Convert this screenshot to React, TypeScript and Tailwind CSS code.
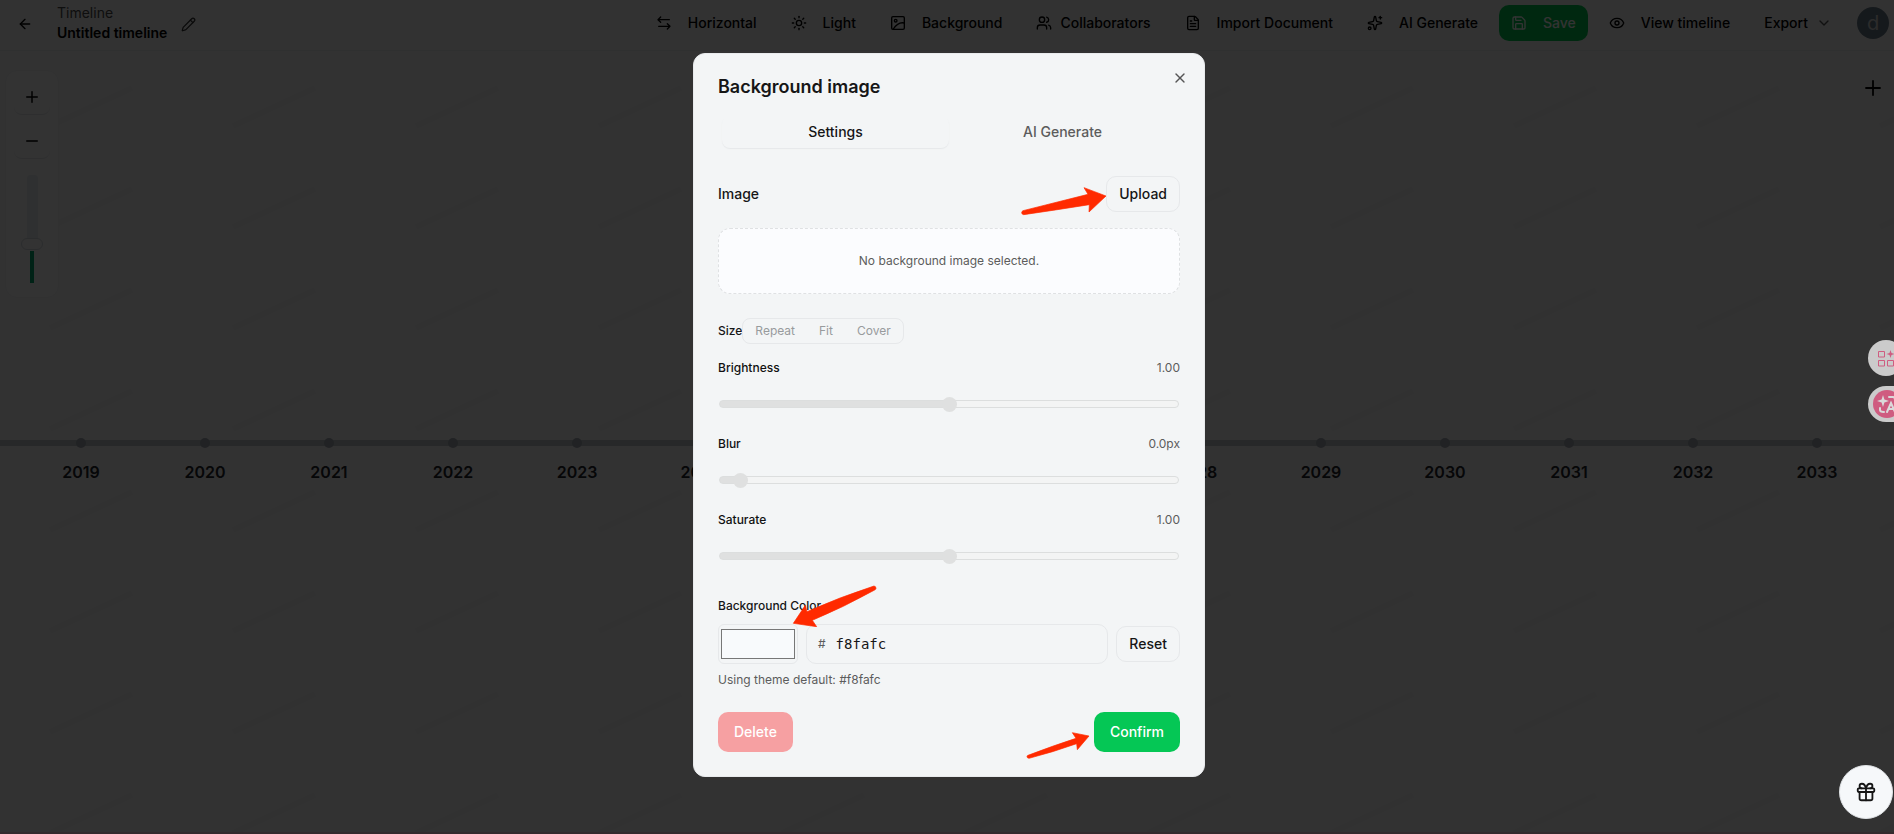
import { useState } from "react";
import type { ReactNode } from "react";
import clsx from "clsx";
import {
  ArrowLeft, ChevronDown, Eye, FileText, Gift, Minus, Pencil, Plus, Save, Sparkles, Sun, Users, X
} from "lucide-react";

const YEARS = Array.from({ length: 15 }, (_, i) => 2019 + i);

const SIZES = ["Repeat", "Fit", "Cover"];

const FILTERS = [
  { id: "brightness", label: "Brightness", display: "1.00", position: 50 },
  { id: "blur", label: "Blur", display: "0.0px", position: 3 },
  { id: "saturate", label: "Saturate", display: "1.00", position: 50 },
];

function SwapIcon() {
  return (
    <svg viewBox="0 0 24 24" className="w-4 h-4" fill="none" stroke="currentColor" strokeWidth="2" strokeLinecap="round" strokeLinejoin="round" aria-hidden="true">
      <path d="M20 7H3M7 3L3 7l4 4" />
      <path d="M4 17h17M17 13l4 4-4 4" />
    </svg>
  );
}

function PictureIcon() {
  return (
    <svg viewBox="0 0 24 24" className="w-4 h-4" fill="none" stroke="currentColor" strokeWidth="2" strokeLinecap="round" strokeLinejoin="round" aria-hidden="true">
      <rect x="2.5" y="2.5" width="19" height="19" rx="2" />
      <circle cx="8.5" cy="8.5" r="2" />
      <path d="M5 21c4-6 9-11 16.5-9" />
    </svg>
  );
}

function ToolbarButton({ icon, tight, children }: { icon: ReactNode; tight?: boolean; children: ReactNode }) {
  return (
    <button className={clsx("flex items-center h-9 px-[13px] rounded-lg text-sm font-medium text-black", tight ? "gap-2" : "gap-4")}>
      {icon}
      {children}
    </button>
  );
}

function Header() {
  return (
    <header className="flex items-start justify-between h-[51px] pt-[5px] pl-[17px] pr-[5px] border-b border-[#eceef0] whitespace-nowrap">
      <div className="flex items-center">
        <button aria-label="Back" className="flex items-center h-9">
          <ArrowLeft className="w-4 h-4" />
        </button>
        <div className="ml-6 text-sm leading-5">
          <div className="-mt-0.5 text-[#4b4b4b]">Timeline</div>
          <div className="font-semibold text-black">Untitled timeline</div>
        </div>
        <button aria-label="Rename timeline" className="ml-[14px] text-[#333]">
          <Pencil className="w-[15px] h-[15px]" />
        </button>
      </div>

      <div className="flex items-center gap-2">
        <ToolbarButton icon={<SwapIcon />}>Horizontal</ToolbarButton>
        <ToolbarButton icon={<Sun className="w-4 h-4" />}>Light</ToolbarButton>
        <ToolbarButton icon={<PictureIcon />}>Background</ToolbarButton>
        <ToolbarButton icon={<Users className="w-4 h-4" />} tight>Collaborators</ToolbarButton>
        <ToolbarButton icon={<FileText className="w-4 h-4" />}>Import Document</ToolbarButton>
        <ToolbarButton icon={<Sparkles className="w-4 h-4" />}>AI Generate</ToolbarButton>
        <button className="flex items-center gap-4 h-9 px-3 rounded-[10px] bg-[#00c950] text-sm font-medium text-white">
          <Save className="w-4 h-4" />
          Save
        </button>
        <ToolbarButton icon={<Eye className="w-4 h-4" />}>View timeline</ToolbarButton>
        <button className="flex items-center gap-2 h-9 px-[13px] text-sm font-medium text-black">
          Export
          <ChevronDown className="w-4 h-4 text-[#555]" />
        </button>
        <button aria-label="Account" className="w-8 h-8 ml-1 rounded-full bg-[#6b7d8c] text-xl leading-8 text-[#d8d8d8]">
          d
        </button>
      </div>
    </header>
  );
}

function ZoomPanel() {
  return (
    <div className="flex flex-col items-center w-[54px] h-[228px] ml-[5px] pt-2 rounded-xl border border-[#f3f4f6] bg-[#fdfdfd]">
      <button aria-label="Zoom in" className="flex items-center justify-center w-9 h-9 rounded-lg border-b border-[#e5e7eb]">
        <Plus className="w-[18px] h-[18px]" />
      </button>
      <button aria-label="Zoom out" className="flex items-center justify-center w-9 h-9 mt-2 rounded-lg border-b border-[#e5e7eb]">
        <Minus className="w-[18px] h-[18px]" />
      </button>
      <div className="grid justify-items-center w-6 h-[108px] mt-4">
        <div className="col-start-1 row-start-1 w-[11px] h-[68px] rounded-t bg-[#e8edf2]" />
        <div className="col-start-1 row-start-1 self-end w-1 h-8 bg-[#00a870]" />
        <input
          type="range"
          aria-label="Zoom level"
          defaultValue={34}
          className="col-start-1 row-start-1 w-6 h-[108px] appearance-none bg-transparent [writing-mode:vertical-lr] [direction:rtl] [&::-webkit-slider-thumb]:appearance-none [&::-webkit-slider-thumb]:w-[22px] [&::-webkit-slider-thumb]:h-3 [&::-webkit-slider-thumb]:rounded-md [&::-webkit-slider-thumb]:border [&::-webkit-slider-thumb]:border-[#d5dbe1] [&::-webkit-slider-thumb]:bg-white"
        />
      </div>
    </div>
  );
}

function Canvas() {
  return (
    <main className="relative flex flex-col flex-1">
      <svg className="absolute inset-0 w-full h-full" aria-hidden="true">
        <defs>
          <pattern id="streaks" width="183" height="101" patternUnits="userSpaceOnUse">
            <path d="M50 75l82-38" stroke="#f4f5f6" strokeWidth="6" />
          </pattern>
        </defs>
        <rect width="100%" height="100%" fill="url(#streaks)" />
      </svg>

      <div className="relative flex items-start justify-between h-[387px] pt-[19px] pr-[3px]">
        <ZoomPanel />
        <button aria-label="Add event" className="flex items-center justify-center w-9 h-9 rounded-lg">
          <Plus className="w-6 h-6" strokeWidth={1.8} />
        </button>
      </div>

      {/* Year axis */}
      <div className="relative overflow-hidden">
        <div className="flex items-center h-1.5 bg-[#c3c9cc] my-[2px] pl-[19px]">
          {YEARS.map(year => (
            <div key={year} className="flex justify-center w-[124px] shrink-0">
              <div className="w-2.5 h-2.5 rounded-full bg-[#a4abb3]" />
            </div>
          ))}
        </div>
        <div className="flex pl-[19px] mt-[14px]">
          {YEARS.map(year => (
            <div key={year} className="w-[124px] shrink-0 text-center text-base font-semibold text-[#1f242b]">
              {year}
            </div>
          ))}
        </div>
      </div>

      <div className="relative h-0.5 mt-auto bg-[#ffd0de]" />
    </main>
  );
}

function PointerArrow({ className, viewBox, d }: { className: string; viewBox: string; d: string }) {
  return (
    <svg viewBox={viewBox} className={clsx("absolute pointer-events-none", className)} fill="#ff2a00" stroke="#ff2a00" strokeWidth="2" strokeLinejoin="round" aria-hidden="true">
      <path d={d} />
    </svg>
  );
}

function FilterSlider({ id, label, display, position }: { id: string; label: string; display: string; position: number }) {
  return (
    <div>
      <div className="flex items-center justify-between text-xs">
        <label htmlFor={id} className="font-medium text-[#111]">{label}</label>
        <span className="text-[#5c5c5c]">{display}</span>
      </div>
      <div className="flex items-center h-8 mt-3 px-px">
        <input
          id={id}
          type="range"
          disabled
          value={position}
          readOnly
          style={{ backgroundImage: `linear-gradient(to right, #dfe0e0 ${position}%, #f3f4f4 ${position}%)` }}
          className="w-full h-2 rounded-full border border-[#dcdede] appearance-none [&::-webkit-slider-thumb]:appearance-none [&::-webkit-slider-thumb]:w-[15px] [&::-webkit-slider-thumb]:h-[15px] [&::-webkit-slider-thumb]:rounded-full [&::-webkit-slider-thumb]:bg-[#dfe0e0]"
        />
      </div>
    </div>
  );
}

function BackgroundDialog() {
  const [color, setColor] = useState("f8fafc");

  return (
    <div role="dialog" aria-labelledby="dialog-title" className="relative w-full max-w-lg p-6 rounded-xl border border-[#e8eaec] bg-[#f3f5f6] text-[#161616]">
      <h2 id="dialog-title" className="text-lg leading-[18px] font-semibold">Background image</h2>
      <button aria-label="Close" className="absolute top-4 right-4 text-[#555]">
        <X className="w-4 h-4" />
      </button>

      <div role="tablist" className="grid grid-cols-2 p-1 mt-4 text-sm font-medium">
        <button role="tab" aria-selected="true" className="h-8 rounded-lg text-[#161616] shadow-[0_1px_1px_#e6e8ea]">Settings</button>
        <button role="tab" aria-selected="false" className="h-8 rounded-lg text-[#5c5c5c]">AI Generate</button>
      </div>

      <div className="flex items-center justify-between mt-6">
        <span className="text-sm font-medium">Image</span>
        <div className="relative">
          <button className="h-9 px-3 rounded-[10px] border border-[#e6e8ea] text-sm font-medium">Upload</button>
          <PointerArrow
            className="right-full top-[9px] w-[86px] h-8"
            viewBox="992 406 258 96"
            d="M1001 483L1196 434L1184 414Q1216 426 1250 439L1199 487L1200 465Q1100 481 1003 495Q997 494 997 489Q997 485 1001 483Z"
          />
        </div>
      </div>

      <div className="mt-4 p-6 rounded-xl border border-dashed border-[#dfe1e3] bg-[#fbfcfe] text-center text-xs text-[#5c5c5c]">
        No background image selected.
      </div>

      <div className="flex items-center mt-6 text-xs">
        <span className="font-medium">Size</span>
        <div className="flex rounded-lg border border-[#e6e8ea] text-[#989b9d]">
          {SIZES.map(size => (
            <button key={size} disabled className="h-6 px-3">{size}</button>
          ))}
        </div>
      </div>

      <div className="flex flex-col gap-4 mt-4">
        {FILTERS.map(filter => (
          <FilterSlider key={filter.id} {...filter} />
        ))}
      </div>

      <div className="mt-6">
        <label htmlFor="bg-hex" className="block text-xs leading-5 font-medium">Background Color</label>
        <div className="flex items-center gap-2 mt-2">
          <div className="relative">
            <input
              type="color"
              aria-label="Pick background color"
              value={`#${color}`}
              onChange={e => setColor(e.target.value.slice(1))}
              className="block w-20 h-10 rounded-md border border-[#e6e8ea]"
            />
            <PointerArrow
              className="left-[74px] bottom-[37px] w-[86px] h-[42px]"
              viewBox="306 16 258 126"
              d="M552 19Q558 20 558 26Q558 29 554 31Q460 83 367 122L380 141L310 131L346 77L351 96Q450 52 552 19Z"
            />
          </div>
          <div className="flex flex-1 items-center h-10 px-[11px] rounded-[10px] border border-[#e6e8ea]">
            <span className="text-xs text-[#5c5c5c]">#</span>
            <input
              id="bg-hex"
              value={color}
              onChange={e => setColor(e.target.value)}
              className="flex-1 min-w-0 ml-2.5 bg-transparent font-['DejaVu_Sans_Mono',monospace] text-sm outline-none"
            />
          </div>
          <button onClick={() => setColor("f8fafc")} className="h-9 px-3 rounded-[10px] border border-[#e6e8ea] text-sm font-medium">Reset</button>
        </div>
        <p className="mt-2 text-xs text-[#5c5c5c]">Using theme default: #f8fafc</p>
      </div>

      <div className="flex items-center justify-between mt-6 text-sm font-medium text-white">
        <button disabled className="h-10 px-4 rounded-[10px] bg-[#f6a0a2]">Delete</button>
        <div className="relative">
          <button className="h-10 px-4 rounded-[10px] bg-[#05c755]">Confirm</button>
          <PointerArrow
            className="right-full top-[18px] w-[70px] h-[30px]"
            viewBox="1002 448 210 90"
            d="M1014 524Q1090 495 1158 473L1147 456L1197 466L1162 507L1160 489Q1090 514 1017 533Q1011 532 1011 528Q1011 525 1014 524Z"
          />
        </div>
      </div>
    </div>
  );
}

function SideWidgets() {
  return (
    <div className="fixed right-[-18px] top-[340px] z-20 flex flex-col items-start gap-2.5">
      <button aria-label="Extensions" className="flex items-center justify-center w-9 h-9 rounded-full bg-[#cbcbcb]">
        <svg viewBox="0 0 18 18" className="w-[18px] h-[18px]" fill="none" stroke="#cf5c80" aria-hidden="true">
          <path d="M1.500 2.500h6v5.500h-6zM1.500 11.500h6v5.500h-6zM10.500 11.500h6v5.500h-6z" />
          <path d="M13.500 1l1 3 3 1-3 1-1 3-1-3-3-1 3-1z" fill="#cf5c80" stroke="none" />
        </svg>
      </button>
      <button aria-label="Translate" className="flex items-center w-11 h-9 pl-[5px] rounded-l-full bg-[#cbcbcb]">
        <svg viewBox="0 0 28 28" className="w-7 h-7" fill="none" stroke="#dadada" strokeWidth="2" strokeLinecap="round" aria-hidden="true">
          <circle cx="14" cy="14" r="14" fill="#cf5c80" stroke="none" />
          <path d="M10 5l1.400 4.600L16 11l-4.600 1.400L10 17l-1.400-4.600L4 11l4.600-1.400z" fill="#dadada" stroke="none" />
          <path d="M16 7h4q2 0 2 3M7 18v2q0 2 4 2M14 22l4-9 4 9M15.500 19h5" />
        </svg>
      </button>
    </div>
  );
}

export default function App() {
  return (
    <div className="relative flex flex-col min-h-screen overflow-hidden bg-[#fafafa] font-[Inter,sans-serif]">
      <Header />
      <Canvas />

      <div className="fixed inset-0 z-10 flex items-start justify-center pt-[53px] pl-1 bg-black/80">
        <BackgroundDialog />
      </div>

      <SideWidgets />
      <button aria-label="Rewards" className="fixed right-px bottom-[15px] z-20 flex items-center justify-center w-[54px] h-[54px] rounded-full border border-[#dfe2e5] bg-[#f6f8fa] text-[#161616]">
        <Gift className="w-[22px] h-[22px]" />
      </button>
    </div>
  );
}
